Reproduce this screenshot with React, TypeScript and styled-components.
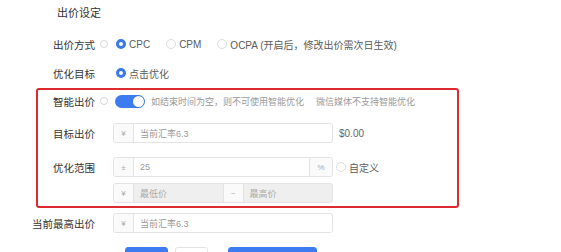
import React from 'react';
import styled, { createGlobalStyle } from 'styled-components';

const GlobalStyle = createGlobalStyle`
  html, body {
    margin: 0;
    padding: 0;
    background: #fff;
  }
  body {
    font-family: "Liberation Sans", "Noto Sans CJK SC", sans-serif;
    color: #333;
  }
`;

const Page = styled.div`
  width: 561px;
  height: 252px;
  overflow: hidden;
`;

const Title = styled.div`
  height: 26px;
  line-height: 26px;
  padding-left: 57px;
  font-size: 11px;
  color: #333;
`;

const Row = styled.div<{ $h?: number; $mt?: number }>`
  display: flex;
  align-items: center;
  height: ${p => p.$h ?? 20}px;
  margin-top: ${p => p.$mt ?? 0}px;
`;

const Label = styled.div<{ $w: number }>`
  width: ${p => p.$w}px;
  flex-shrink: 0;
  text-align: right;
  font-size: 10.5px;
  color: #333;
  white-space: nowrap;
`;

const TipSlot = styled.div`
  width: 18px;
  flex-shrink: 0;
  display: flex;
  justify-content: center;
`;

const TipDot = styled.span`
  width: 6px;
  height: 6px;
  border: 1px solid #d6d6d6;
  border-radius: 50%;
`;

const RadioGroup = styled.div`
  display: flex;
  align-items: center;
  padding-left: 3px;
`;

const RadioItem = styled.label`
  display: flex;
  align-items: center;
  gap: 3px;
  margin-right: 16px;
  font-size: 10px;
  color: #5a5a5a;
  white-space: nowrap;
`;

const RadioDot = styled.span<{ $checked?: boolean }>`
  box-sizing: border-box;
  width: 10px;
  height: 10px;
  border-radius: 50%;
  border: ${p => (p.$checked ? '3px solid #3a78ee' : '1px solid #dcdcdc')};
  background: #fff;
`;

const Highlight = styled.div`
  box-sizing: border-box;
  margin-left: 36px;
  margin-top: 5px;
  width: 423px;
  height: 120px;
  border: 2px solid #dc2a2f;
  border-radius: 3px;
`;

const Switch = styled.span`
  position: relative;
  margin-left: 2px;
  width: 30px;
  height: 13px;
  border-radius: 7px;
  background: #3c7cf0;
  flex-shrink: 0;
`;

const Knob = styled.span`
  position: absolute;
  right: 1px;
  top: 1px;
  width: 11px;
  height: 11px;
  border-radius: 50%;
  background: #fff;
  box-shadow: 0 0 1px rgba(0, 0, 0, 0.3);
`;

const Hint = styled.span<{ $ml?: number }>`
  margin-left: ${p => p.$ml ?? 0}px;
  font-size: 9px;
  color: #999;
  white-space: nowrap;
`;

const InputGroup = styled.div<{ $disabled?: boolean }>`
  box-sizing: border-box;
  display: flex;
  width: 220px;
  height: 20px;
  border: 1px solid #e3e3e3;
  border-radius: 3px;
  overflow: hidden;
  background: ${p => (p.$disabled ? '#efefef' : '#fff')};
`;

const Addon = styled.span<{ $w?: number; $side?: 'left' | 'right' | 'both' }>`
  width: ${p => p.$w ?? 19}px;
  flex-shrink: 0;
  display: flex;
  align-items: center;
  justify-content: center;
  font-size: 8px;
  color: #aaa;
  background: #fafafa;
  border-left: ${p => (p.$side === 'right' || p.$side === 'both' ? '1px solid #e3e3e3' : 'none')};
  border-right: ${p => (p.$side === 'left' || p.$side === 'both' ? '1px solid #e3e3e3' : 'none')};
`;

const Field = styled.span<{ $muted?: boolean }>`
  flex: 1;
  display: flex;
  align-items: center;
  padding-left: 6px;
  font-size: 9px;
  color: ${p => (p.$muted ? '#aaa' : '#999')};
  white-space: nowrap;
`;

const After = styled.span`
  margin-left: 6px;
  font-size: 10px;
  color: #666;
`;

const ButtonRow = styled.div`
  display: flex;
  margin-top: 14px;
  padding-left: 125px;
  gap: 7px;
`;

const Button = styled.button<{ $w: number; $primary?: boolean; $ml?: number }>`
  width: ${p => p.$w}px;
  height: 24px;
  margin-left: ${p => p.$ml ?? 0}px;
  border-radius: 3px;
  border: 1px solid ${p => (p.$primary ? '#3c7cf0' : '#e3e3e3')};
  background: ${p => (p.$primary ? '#3c7cf0' : '#fff')};
  padding: 0;
`;

const Info = () => (
  <TipSlot>
    <TipDot />
  </TipSlot>
);

export default function App() {
  return (
    <Page>
      <GlobalStyle />
      <Title>出价设定</Title>

      <Row $mt={8}>
        <Label $w={95}>出价方式</Label>
        <Info />
        <RadioGroup>
          <RadioItem><RadioDot $checked />CPC</RadioItem>
          <RadioItem><RadioDot />CPM</RadioItem>
          <RadioItem><RadioDot />OCPA (开启后，修改出价需次日生效)</RadioItem>
        </RadioGroup>
      </Row>

      <Row $mt={9}>
        <Label $w={95}>优化目标</Label>
        <TipSlot />
        <RadioGroup>
          <RadioItem><RadioDot $checked />点击优化</RadioItem>
        </RadioGroup>
      </Row>

      <Highlight>
        <Row $h={22}>
          <Label $w={57}>智能出价</Label>
          <Info />
          <Switch><Knob /></Switch>
          <Hint $ml={6}>如结束时间为空，则不可使用智能优化</Hint>
          <Hint $ml={12}>微信媒体不支持智能优化</Hint>
        </Row>

        <Row $mt={11}>
          <Label $w={57}>目标出价</Label>
          <TipSlot />
          <InputGroup>
            <Addon $side="left">¥</Addon>
            <Field>当前汇率6.3</Field>
          </InputGroup>
          <After>$0.00</After>
        </Row>

        <Row $mt={14}>
          <Label $w={57}>优化范围</Label>
          <TipSlot />
          <InputGroup>
            <Addon $side="left">±</Addon>
            <Field>25</Field>
            <Addon $side="right" $w={22}>%</Addon>
          </InputGroup>
          <RadioGroup>
            <RadioItem><RadioDot />自定义</RadioItem>
          </RadioGroup>
        </Row>

        <Row $mt={6}>
          <Label $w={57} />
          <TipSlot />
          <InputGroup $disabled>
            <Addon $side="left">¥</Addon>
            <Field $muted>最低价</Field>
            <Addon $side="both" $w={19}>~</Addon>
            <Field $muted>最高价</Field>
          </InputGroup>
        </Row>
      </Highlight>

      <Row $mt={5}>
        <Label $w={95}>当前最高出价</Label>
        <TipSlot />
        <InputGroup>
          <Addon $side="left">¥</Addon>
          <Field>当前汇率6.3</Field>
        </InputGroup>
      </Row>

      <ButtonRow>
        <Button $w={43} $primary aria-label="确定" />
        <Button $w={33} aria-label="取消" />
        <Button $w={89} $primary $ml={13} aria-label="保存" />
      </ButtonRow>
    </Page>
  );
}
